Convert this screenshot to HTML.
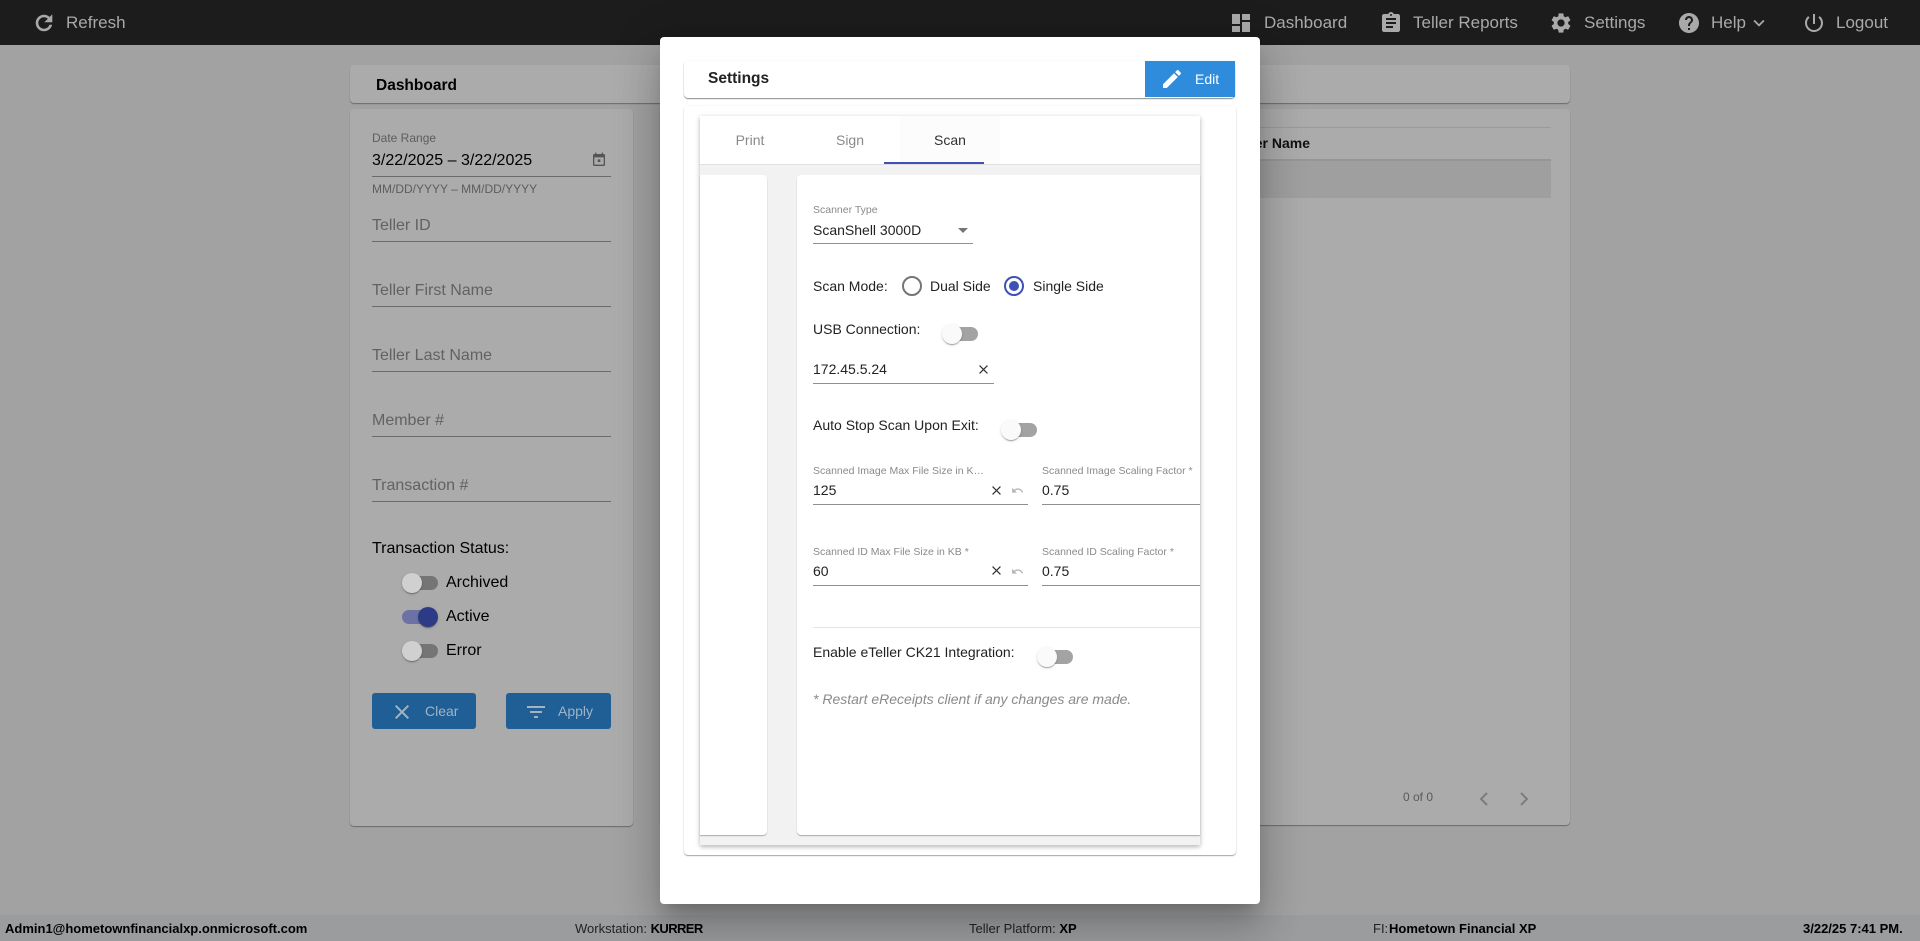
<!DOCTYPE html>
<html lang="en"><head><meta charset="utf-8"><title>Settings</title>
<style>
html,body{margin:0;padding:0;width:1920px;height:941px;overflow:hidden;background:#a2a2a2;font-family:"Liberation Sans",sans-serif}
div,span,svg{position:absolute;box-sizing:border-box}
b span,span span{position:static}
.t{white-space:nowrap;height:20px;line-height:20px}
.h{color:#a9a9a9;font-size:17px;top:13px}
.ic{fill:#a9a9a9;width:24px;height:24px;top:11px}
.card{background:#ababab;border-radius:4px;box-shadow:0 1px 1px rgba(0,0,0,.35)}
.ph{color:#626262;font-size:16px;left:372px}
.ul{height:1px;background:#6b6b6b;left:372px;width:239px}
.tr{width:34px;height:14px;border-radius:7px;background:#757575}
.th{width:20px;height:20px;border-radius:50%;background:#d0d0d0;box-shadow:0 2px 1px -1px rgba(0,0,0,.2),0 1px 1px rgba(0,0,0,.14),0 1px 3px rgba(0,0,0,.12)}
.lbl{color:#000;font-size:16px;left:446px}
.btn{background:#1f5f96;border-radius:3px;height:36px;top:693px}
.m{color:#222;font-size:14px}
.sm{color:#8a8a8a;font-size:10.5px}
.u2{height:1px;background:#8f8f8f}
.tg .tr{background:#a3a3a3}
.tw{background:#fafafa}
.f{font-size:13px;color:#000;top:919px}
</style></head><body>

<!-- top bar -->
<div style="left:0;top:0;width:1920px;height:45px;background:#1c1c1c"></div>
<svg class="ic" viewBox="0 0 24 24" style="left:32px"><path stroke="#a9a9a9" stroke-width=".6" d="M17.65 6.35C16.2 4.9 14.21 4 12 4c-4.42 0-7.99 3.58-7.99 8s3.57 8 7.99 8c3.73 0 6.84-2.55 7.73-6h-2.08c-.82 2.33-3.04 4-5.65 4-3.31 0-6-2.69-6-6s2.69-6 6-6c1.66 0 3.14.69 4.22 1.78L13 11h7V4l-2.35 2.35z"/></svg>
<span class="t h" style="left:66px">Refresh</span>
<svg class="ic" viewBox="0 0 24 24" style="left:1229px"><path d="M3 13h8V3H3v10zm0 8h8v-6H3v6zm10 0h8V11h-8v10zm0-18v6h8V3h-8z"/></svg>
<span class="t h" style="left:1264px">Dashboard</span>
<svg class="ic" viewBox="0 0 24 24" style="left:1379px"><path d="M19 3h-4.18C14.4 1.84 13.3 1 12 1c-1.3 0-2.4.84-2.82 2H5c-1.1 0-2 .9-2 2v14c0 1.1.9 2 2 2h14c1.1 0 2-.9 2-2V5c0-1.1-.9-2-2-2zm-7 0c.55 0 1 .45 1 1s-.45 1-1 1-1-.45-1-1 .45-1 1-1zm2 14H7v-2h7v2zm3-4H7v-2h10v2zm0-4H7V7h10v2z"/></svg>
<span class="t h" style="left:1413px">Teller Reports</span>
<svg class="ic" viewBox="0 0 24 24" style="left:1549px"><path d="M19.14 12.94c.04-.3.06-.61.06-.94 0-.32-.02-.64-.07-.94l2.03-1.58c.18-.14.23-.41.12-.61l-1.92-3.32c-.12-.22-.37-.29-.59-.22l-2.39.96c-.5-.38-1.03-.7-1.62-.94l-.36-2.54c-.04-.24-.24-.41-.48-.41h-3.84c-.24 0-.43.17-.47.41l-.36 2.54c-.59.24-1.13.57-1.62.94l-2.39-.96c-.22-.08-.47 0-.59.22L2.74 8.87c-.12.21-.08.47.12.61l2.03 1.58c-.05.3-.09.63-.09.94s.02.64.07.94l-2.03 1.58c-.18.14-.23.41-.12.61l1.92 3.32c.12.22.37.29.59.22l2.39-.96c.5.38 1.03.7 1.62.94l.36 2.54c.05.24.24.41.48.41h3.84c.24 0 .44-.17.47-.41l.36-2.54c.59-.24 1.13-.56 1.62-.94l2.39.96c.22.08.47 0 .59-.22l1.92-3.32c.12-.22.07-.47-.12-.61l-2.01-1.58zM12 15.6c-1.98 0-3.6-1.62-3.6-3.6s1.62-3.6 3.6-3.6 3.6 1.62 3.6 3.6-1.62 3.6-3.6 3.6z"/></svg>
<span class="t h" style="left:1584px">Settings</span>
<svg class="ic" viewBox="0 0 24 24" style="left:1677px"><path d="M12 2C6.48 2 2 6.48 2 12s4.48 10 10 10 10-4.48 10-10S17.52 2 12 2zm1 17h-2v-2h2v2zm2.07-7.75l-.9.92C13.45 12.9 13 13.5 13 15h-2v-.5c0-1.1.45-2.1 1.17-2.83l1.24-1.26c.37-.36.59-.86.59-1.41 0-1.1-.9-2-2-2s-2 .9-2 2H8c0-2.21 1.79-4 4-4s4 1.79 4 4c0 .88-.36 1.68-.93 2.25z"/></svg>
<span class="t h" style="left:1711px">Help</span>
<svg class="ic" viewBox="0 0 24 24" style="left:1748px;width:22px;height:22px;top:12px"><path d="M16.59 8.59L12 13.17 7.41 8.59 6 10l6 6 6-6z"/></svg>
<svg class="ic" viewBox="0 0 24 24" style="left:1802px"><path d="M13 3h-2v10h2V3zm4.83 2.17l-1.42 1.42C17.99 7.86 19 9.81 19 12c0 3.87-3.13 7-7 7s-7-3.13-7-7c0-2.19 1.01-4.14 2.58-5.42L6.17 5.17C4.23 6.82 3 9.26 3 12c0 4.97 4.03 9 9 9s9-4.03 9-9c0-2.74-1.23-5.18-3.17-6.83z"/></svg>
<span class="t h" style="left:1836px">Logout</span>

<!-- page -->
<div class="card" style="left:350px;top:65px;width:1220px;height:38px"></div>
<b class="t" style="position:absolute;left:376px;top:76px;font-size:15.5px;color:#000">Dashboard</b>

<div class="card" style="left:350px;top:109px;width:283px;height:717px"></div>
<div class="card" style="left:660px;top:109px;width:910px;height:716px"></div>

<span class="t" style="left:372px;top:128px;font-size:12px;color:#5d5d5d">Date Range</span>
<span class="t" style="left:372px;top:151px;font-size:16px;color:#000">3/22/2025 – 3/22/2025</span>
<svg viewBox="0 0 24 24" style="left:591px;top:152px;width:16px;height:16px;fill:#555"><path d="M19 3h-1V1h-2v2H8V1H6v2H5c-1.1 0-2 .9-2 2v14c0 1.1.9 2 2 2h14c1.1 0 2-.9 2-2V5c0-1.1-.9-2-2-2zm0 16H5V8h14v11zM10 11h4v4h-4z"/></svg>
<div class="ul" style="top:176px"></div>
<span class="t" style="left:372px;top:179px;font-size:12px;color:#5d5d5d">MM/DD/YYYY – MM/DD/YYYY</span>

<span class="t ph" style="top:216px">Teller ID</span><div class="ul" style="top:241px"></div>
<span class="t ph" style="top:281px">Teller First Name</span><div class="ul" style="top:306px"></div>
<span class="t ph" style="top:346px">Teller Last Name</span><div class="ul" style="top:371px"></div>
<span class="t ph" style="top:411px">Member #</span><div class="ul" style="top:436px"></div>
<span class="t ph" style="top:476px">Transaction #</span><div class="ul" style="top:501px"></div>

<span class="t" style="left:372px;top:539px;font-size:16px;color:#000">Transaction Status:</span>
<div class="tr" style="left:404px;top:576px"></div><div class="th" style="left:402px;top:573px"></div>
<span class="t lbl" style="top:573px">Archived</span>
<div class="tr" style="left:402px;top:610px;background:#6c72a3"></div><div class="th" style="left:418px;top:607px;background:#2d3a85"></div>
<span class="t lbl" style="top:607px">Active</span>
<div class="tr" style="left:404px;top:644px"></div><div class="th" style="left:402px;top:641px"></div>
<span class="t lbl" style="top:641px">Error</span>

<div class="btn" style="left:372px;width:104px"></div>
<svg viewBox="0 0 24 24" style="left:390px;top:700px;width:24px;height:24px;fill:#a5b3bf"><path d="M19 6.41L17.59 5 12 10.59 6.41 5 5 6.41 10.59 12 5 17.59 6.41 19 12 13.41 17.59 19 19 17.59 13.41 12z"/></svg>
<span class="t" style="left:425px;top:701px;font-size:14px;color:#9fb3c5">Clear</span>
<div class="btn" style="left:506px;width:105px"></div>
<svg viewBox="0 0 24 24" style="left:524px;top:700px;width:24px;height:24px;fill:#a5b3bf"><path d="M10 18h4v-2h-4v2zM3 6v2h18V6H3zm3 7h12v-2H6v2z"/></svg>
<span class="t" style="left:558px;top:701px;font-size:14px;color:#9fb3c5">Apply</span>

<!-- right panel -->
<div style="left:660px;top:127px;width:891px;height:1px;background:#9a9a9a"></div>
<b class="t" style="position:absolute;left:1240px;top:133px;font-size:14px;color:#111;width:70px;text-align:right">er Name</b>
<div style="left:660px;top:159px;width:891px;height:39px;background:#9f9f9f;border-top:2px solid #969696"></div>
<span class="t" style="left:1403px;top:787px;font-size:12px;color:#5a5a5a">0 of 0</span>
<svg viewBox="0 0 24 24" style="left:1472px;top:787px;width:24px;height:24px;fill:none;stroke:#7c7c7c;stroke-width:2"><path d="M15 6l-6 6 6 6"/></svg>
<svg viewBox="0 0 24 24" style="left:1512px;top:787px;width:24px;height:24px;fill:none;stroke:#7c7c7c;stroke-width:2"><path d="M9 6l6 6-6 6"/></svg>

<!-- footer -->
<div style="left:0;top:915px;width:1920px;height:26px;background:#9a9c9e"></div>
<b class="t f" style="position:absolute;left:5px">Admin1@hometownfinancialxp.onmicrosoft.com</b>
<span class="t f" style="left:575px;color:#222">Workstation: <b style="color:#000;letter-spacing:-.6px">KURRER</b></span>
<span class="t f" style="left:969px;color:#222">Teller Platform: <b style="color:#000">XP</b></span>
<span class="t f" style="left:1373px;color:#222">FI: </span>
<b class="t f" style="position:absolute;left:1389px">Hometown Financial XP</b>
<b class="t f" style="position:absolute;left:1803px">3/22/25 7:41 PM.</b>

<!-- modal -->
<div style="left:660px;top:37px;width:600px;height:867px;background:#fff;border-radius:4px;box-shadow:0 11px 15px -7px rgba(0,0,0,.2),0 24px 38px 3px rgba(0,0,0,.14),0 9px 46px 8px rgba(0,0,0,.12)"></div>

<div style="left:684px;top:61px;width:551px;height:37px;background:#fff;border-radius:4px;box-shadow:0 1px 1px rgba(0,0,0,.45),0 0 2px rgba(0,0,0,.06)"></div>
<b class="t" style="position:absolute;left:708px;top:69px;font-size:15.5px;color:#222">Settings</b>
<div style="left:1145px;top:61px;width:90px;height:36px;background:#2f8cdc"></div>
<svg viewBox="0 0 24 24" style="left:1160px;top:67px;width:24px;height:24px;fill:#fff"><path d="M3 17.25V21h3.75L17.81 9.94l-3.75-3.75L3 17.25zM20.71 7.04c.39-.39.39-1.02 0-1.41l-2.34-2.34c-.39-.39-1.02-.39-1.41 0l-1.83 1.83 3.75 3.75 1.83-1.83z"/></svg>
<span class="t" style="left:1195px;top:69px;font-size:14px;color:#fff">Edit</span>

<div style="left:684px;top:106px;width:552px;height:749px;background:#fff;border-radius:4px;box-shadow:0 1px 1px rgba(0,0,0,.35),0 0 2px rgba(0,0,0,.06)"></div>
<div style="left:700px;top:116px;width:500px;height:729px;background:#f2f2f2;box-shadow:0 2px 4px rgba(0,0,0,.2),0 1px 6px rgba(0,0,0,.12)"></div>
<div style="left:700px;top:116px;width:500px;height:49px;background:#fff;border-bottom:1px solid #e0e0e0"></div>
<div style="left:900px;top:116px;width:100px;height:48px;background:#fcfcfc"></div>
<div style="left:884px;top:162px;width:100px;height:2px;background:#3f51b5"></div>
<span class="t" style="left:700px;top:130px;width:100px;text-align:center;font-size:14px;color:#8a8a8a">Print</span>
<span class="t" style="left:800px;top:130px;width:100px;text-align:center;font-size:14px;color:#8a8a8a">Sign</span>
<span class="t" style="left:900px;top:130px;width:100px;text-align:center;font-size:14px;color:#333">Scan</span>

<div style="left:700px;top:175px;width:67px;height:660px;background:#fff;border-radius:0 4px 4px 0;box-shadow:0 1px 1px rgba(0,0,0,.3)"></div>
<div style="left:797px;top:175px;width:403px;height:660px;background:#fff;border-radius:4px 0 0 4px;box-shadow:0 1px 1px rgba(0,0,0,.3)"></div>

<span class="t sm" style="left:813px;top:200px">Scanner Type</span>
<span class="t m" style="left:813px;top:220px">ScanShell 3000D</span>
<svg viewBox="0 0 10 5" style="left:958px;top:228px;width:10px;height:5px;fill:#757575"><path d="M0 0h10L5 5z"/></svg>
<div class="u2" style="left:813px;top:243px;width:160px"></div>

<span class="t m" style="left:813px;top:276px">Scan Mode:</span>
<div style="left:902px;top:276px;width:20px;height:20px;border:2px solid #757575;border-radius:50%"></div>
<span class="t m" style="left:930px;top:276px">Dual Side</span>
<div style="left:1004px;top:276px;width:20px;height:20px;border:2px solid #3f51b5;border-radius:50%"></div>
<div style="left:1009px;top:281px;width:10px;height:10px;background:#3f51b5;border-radius:50%"></div>
<span class="t m" style="left:1033px;top:276px">Single Side</span>

<span class="t m" style="left:813px;top:319px">USB Connection:</span>
<div class="tg"><div class="tr" style="left:944px;top:327px"></div></div><div class="th tw" style="left:942px;top:324px"></div>
<span class="t m" style="left:813px;top:359px">172.45.5.24</span>
<svg viewBox="0 0 24 24" style="left:976px;top:362px;width:15px;height:15px;fill:#333"><path d="M19 6.41L17.59 5 12 10.59 6.41 5 5 6.41 10.59 12 5 17.59 6.41 19 12 13.41 17.59 19 19 17.59 13.41 12z"/></svg>
<div class="u2" style="left:813px;top:383px;width:181px"></div>

<span class="t m" style="left:813px;top:415px">Auto Stop Scan Upon Exit:</span>
<div class="tg"><div class="tr" style="left:1003px;top:423px"></div></div><div class="th tw" style="left:1001px;top:420px"></div>

<span class="t sm" style="left:813px;top:461px">Scanned Image Max File Size in K…</span>
<span class="t sm" style="left:1042px;top:461px">Scanned Image Scaling Factor *</span>
<span class="t m" style="left:813px;top:480px">125</span>
<span class="t m" style="left:1042px;top:480px">0.75</span>
<svg viewBox="0 0 24 24" style="left:989px;top:483px;width:15px;height:15px;fill:#333"><path d="M19 6.41L17.59 5 12 10.59 6.41 5 5 6.41 10.59 12 5 17.59 6.41 19 12 13.41 17.59 19 19 17.59 13.41 12z"/></svg>
<svg viewBox="0 0 24 24" style="left:1011px;top:484px;width:13px;height:13px;fill:#b5b5b5"><path d="M12.5 8c-2.65 0-5.05.99-6.9 2.6L2 7v9h9l-3.62-3.62c1.39-1.16 3.16-1.88 5.12-1.88 3.54 0 6.55 2.31 7.6 5.5l2.37-.78C21.08 11.03 17.15 8 12.5 8z"/></svg>
<div class="u2" style="left:813px;top:504px;width:215px"></div>
<div class="u2" style="left:1042px;top:504px;width:158px"></div>

<span class="t sm" style="left:813px;top:542px">Scanned ID Max File Size in KB *</span>
<span class="t sm" style="left:1042px;top:542px">Scanned ID Scaling Factor *</span>
<span class="t m" style="left:813px;top:561px">60</span>
<span class="t m" style="left:1042px;top:561px">0.75</span>
<svg viewBox="0 0 24 24" style="left:989px;top:563px;width:15px;height:15px;fill:#333"><path d="M19 6.41L17.59 5 12 10.59 6.41 5 5 6.41 10.59 12 5 17.59 6.41 19 12 13.41 17.59 19 19 17.59 13.41 12z"/></svg>
<svg viewBox="0 0 24 24" style="left:1011px;top:565px;width:13px;height:13px;fill:#b5b5b5"><path d="M12.5 8c-2.65 0-5.05.99-6.9 2.6L2 7v9h9l-3.62-3.62c1.39-1.16 3.16-1.88 5.12-1.88 3.54 0 6.55 2.31 7.6 5.5l2.37-.78C21.08 11.03 17.15 8 12.5 8z"/></svg>
<div class="u2" style="left:813px;top:585px;width:215px"></div>
<div class="u2" style="left:1042px;top:585px;width:158px"></div>

<div style="left:813px;top:627px;width:387px;height:1px;background:#e2e2e2"></div>
<span class="t m" style="left:813px;top:642px">Enable eTeller CK21 Integration:</span>
<div class="tg"><div class="tr" style="left:1039px;top:650px"></div></div><div class="th tw" style="left:1037px;top:647px"></div>
<span class="t" style="left:813px;top:689px;font-size:14px;font-style:italic;color:#8a8a8a">* Restart eReceipts client if any changes are made.</span>

</body></html>
